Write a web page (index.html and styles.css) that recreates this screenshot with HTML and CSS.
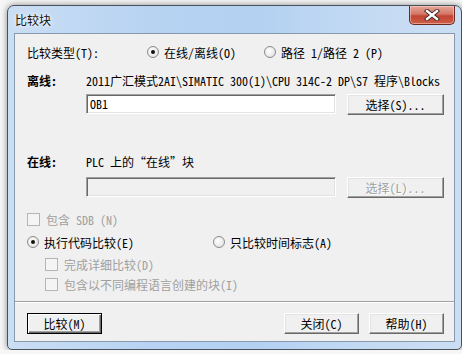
FILE: index.html
```html
<!DOCTYPE html>
<html lang="zh-CN">
<head>
  <meta charset="UTF-8">
  <meta name="viewport" content="width=device-width, initial-scale=1.0">
  <title>比较块</title>
  <link rel="stylesheet" href="styles.css">
</head>
<body>

  <div class="window">
    <div class="titlebar">
      <span class="title">比较块</span>
      <div class="close-btn">
        <svg width="16" height="12" viewBox="0 0 16 12">
          <path d="M3 2 L13 10 M13 2 L3 10" stroke="#3b2320" stroke-width="4.2" stroke-linecap="square" fill="none"/>
          <path d="M3 2 L13 10 M13 2 L3 10" stroke="#fff" stroke-width="2.4" stroke-linecap="square" fill="none"/>
        </svg>
      </div>
    </div>

    <div class="client">
      <div class="row row-type">
        <span class="type-label">比较类型(T):</span>
        <label class="option option-first"><span class="radio checked"></span>在线/离线(O)</label>
        <label class="option"><span class="radio"></span>路径 1/路径 2 (P)</label>
      </div>

      <div class="row row-offline">
        <span class="caption">离线:</span>
        <span>2011广汇模式2AI\SIMATIC 300(1)\CPU 314C-2 DP\S7 程序\Blocks</span>
      </div>

      <div class="row row-field">
        <div class="field">OB1</div>
        <button class="btn btn-select">选择(S)...</button>
      </div>

      <div class="row row-online">
        <span class="caption">在线:</span>
        <span>PLC 上的“在线”块</span>
      </div>

      <div class="row row-field2">
        <div class="field disabled"></div>
        <button class="btn btn-select" disabled>选择(L)...</button>
      </div>

      <div class="row row-sdb">
        <label class="option muted"><span class="check"></span>包含 SDB (N)</label>
      </div>

      <div class="row row-mode">
        <label class="option option-exec"><span class="radio checked"></span>执行代码比较(E)</label>
        <label class="option"><span class="radio"></span>只比较时间标志(A)</label>
      </div>

      <div class="row row-sub">
        <label class="option muted"><span class="check"></span>完成详细比较(D)</label>
      </div>

      <div class="row row-sub2">
        <label class="option muted"><span class="check"></span>包含以不同编程语言创建的块(I)</label>
      </div>

      <div class="separator"></div>

      <div class="row row-buttons">
        <button class="btn btn-default">比较(M)</button>
        <button class="btn btn-close">关闭(C)</button>
        <button class="btn btn-help">帮助(H)</button>
      </div>
    </div>
  </div>

</body>
</html>
```

FILE: styles.css
```css
* {
  box-sizing: border-box;
}

body {
  margin: 0;
  background: #f6f6f6;
  font-family: "Noto Sans Mono CJK SC", "Noto Sans CJK SC", monospace;
  font-size: 12px;
  color: #000;
}

/* Aero window frame */
.window {
  margin: 5px 0 0 7px;
  width: 455px;
  height: 345px;
  padding: 0 6px 7px;
  border: 1px solid #48525c;
  border-radius: 7px 7px 5px 5px;
  background: linear-gradient(90deg, #cadef4 0%, #b8d3f2 30%, #b4d1f2 55%, #c4daf3 80%, #cbdef3 100%);
  box-shadow: 0 0 6px rgba(0, 0, 0, 0.45);
}

.titlebar {
  display: flex;
  justify-content: space-between;
  height: 27px;
  margin: 0 -6px;
}

.title {
  padding: 7px 0 0 7px;
  line-height: 14px;
  font-family: "Noto Sans CJK SC", sans-serif;
  font-size: 12px;
  color: #111;
  text-shadow: 0 0 6px #fff, 0 0 3px #fff;
}

.close-btn {
  width: 46px;
  height: 19px;
  margin-right: 6px;
  display: flex;
  align-items: center;
  justify-content: center;
  border: 1px solid #6a2a22;
  border-top: none;
  border-radius: 0 0 5px 5px;
  background: linear-gradient(#e7a79a 0%, #d47767 45%, #c14534 55%, #cf5d48 100%);
  box-shadow: inset 0 0 0 1px rgba(255, 220, 210, 0.5);
}

/* Dialog client area */
.client {
  height: 309px;
  padding: 8px 10px 0 12px;
  background: #f0f0f0;
  border: 1px solid #8799ad;
  display: flex;
  flex-direction: column;
}

.row {
  display: flex;
  align-items: center;
  height: 20px;
  white-space: nowrap;
}

.row-offline { margin-top: 8px; }
.row-field { margin-top: 4px; }
.row-online { margin-top: 37px; }
.row-field2 { margin-top: 6px; }
.row-sdb { margin-top: 12px; }
.row-mode { margin-top: 3px; }
.row-sub { margin-top: 2px; padding-left: 18px; }
.row-sub2 { padding-left: 18px; }

.type-label {
  width: 120px;
}

.caption {
  width: 59px;
  font-weight: bold;
}

.option {
  display: flex;
  align-items: center;
}

.option-first {
  width: 117px;
}

.option-exec {
  width: 186px;
}

.muted {
  color: #a0a0a0;
}

.radio {
  width: 12px;
  height: 12px;
  margin-right: 5px;
  border: 1px solid #8a8a8a;
  border-radius: 50%;
  background: radial-gradient(circle at 40% 40%, #ffffff 0%, #eaeaea 60%, #d8d8d8 100%);
  position: relative;
}

.radio.checked::after {
  content: "";
  position: absolute;
  left: 3px;
  top: 3px;
  width: 4px;
  height: 4px;
  border-radius: 50%;
  background: #111;
}

.check {
  width: 13px;
  height: 13px;
  margin-right: 6px;
  border: 1px solid #b5b5b5;
  background: #f4f4f4;
}

/* Classic sunken edit box */
.field {
  width: 250px;
  height: 20px;
  margin-left: 59px;
  padding-left: 3px;
  line-height: 18px;
  background: #fff;
  border: 1px solid;
  border-color: #a0a0a0 #fff #fff #a0a0a0;
  box-shadow: inset 1px 1px #696969, inset -1px -1px #e3e3e3;
}

.field.disabled {
  background: #f0f0f0;
}

/* Classic raised push buttons */
.btn {
  height: 21px;
  padding: 0;
  font: inherit;
  color: #000;
  background: #f0f0f0;
  border: 1px solid;
  border-color: #fff #696969 #696969 #fff;
  box-shadow: inset -1px -1px #a0a0a0, inset 1px 1px #e3e3e3;
}

.btn:disabled {
  color: #a0a0a0;
  text-shadow: 1px 1px #fff;
}

.btn-select {
  width: 97px;
  margin-left: auto;
}

.btn-default,
.btn-close,
.btn-help {
  width: 75px;
}

.btn-default {
  border-color: #000;
  box-shadow: inset 1px 1px #fff, inset -1px -1px #696969, inset -2px -2px #a0a0a0;
}

.btn-close {
  margin-left: auto;
}

.btn-help {
  margin-left: 10px;
}

.separator {
  margin: 7px -10px 0 -12px;
  border-top: 1px solid #a0a0a0;
  border-bottom: 1px solid #fff;
}

.row-buttons {
  margin-top: 10px;
  height: 21px;
}
```
